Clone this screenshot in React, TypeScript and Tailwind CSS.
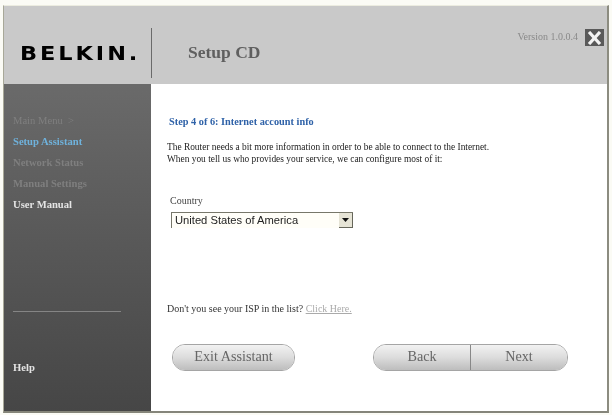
const serif = 'font-["Liberation_Serif",serif]';

function PillButton({ children, className }: { children: React.ReactNode; className: string }) {
  return (
    <div className={`flex items-center justify-center h-full pb-[1px] bg-gradient-to-b from-[#f2f2f2] via-[#dcdcdc] to-[#bdbdbd] text-[#666] text-[14.2px] ${serif} ${className}`}>
      {children}
    </div>
  );
}

function NavItem({ label, color, bold = true }: { label: string; color: string; bold?: boolean }) {
  return <div className={`h-[21px] leading-[21px] text-[10.6px] whitespace-pre ${bold ? 'font-bold' : ''} ${color}`}>{label}</div>;
}

export default function App() {
  return (
    <div className="w-[612px] h-[415px] overflow-hidden bg-[#fbfbf5] pt-[5px] pl-[3px] pr-[3px] pb-[2px] blur-[0.4px]">
      <div className="w-[606px] h-[408px] flex flex-col bg-white border-l border-l-[#a8a898] border-t border-t-[#ecece0] border-r-[2px] border-r-[#8c8c80] border-b-[2px] border-b-[#85857a]">
        {/* Header */}
        <div className="h-[78px] shrink-0 bg-[#c9c9c9] flex relative">
          <div className="w-[147px] pl-[16px] pt-[37px]">
            <div className='origin-left scale-x-[1.18] font-["DejaVu_Sans",sans-serif] font-bold text-[19px] leading-[20px] tracking-[2.5px] text-black whitespace-nowrap'>BELKIN.</div>
          </div>
          <div className="w-[1px] h-[50px] mt-[22px] bg-[#6a6a6a]" />
          <div className={`ml-[36px] pt-[36px] text-[17.5px] leading-[20px] font-bold text-[#5f5f5f] ${serif}`}>Setup CD</div>
          <div className="ml-auto flex items-start pt-[23px] pr-[3px]">
            <span className={`mt-[2px] mr-[7px] text-[10px] leading-[12px] text-[#8a8a8a] ${serif}`}>Version 1.0.0.4</span>
            <div className="w-[19px] h-[17px] bg-[#5a5a5a] flex items-center justify-center">
              <svg width="15" height="14" viewBox="0 0 15 14">
                <path d="M2 1 L13 13 M13 1 L2 13" stroke="#f4f4f4" strokeWidth="3.2" />
              </svg>
            </div>
          </div>
        </div>

        <div className="flex flex-1 min-h-0">
          {/* Sidebar */}
          <div className={`w-[147px] shrink-0 bg-gradient-to-b from-[#6a6a6a] to-[#464646] pl-[9px] flex flex-col ${serif}`}>
            <div className="mt-[26px]">
              <NavItem label="Main Menu  >" color="text-[#7f7f7f]" bold={false} />
              <NavItem label="Setup Assistant" color="text-[#6fb2dc]" />
              <NavItem label="Network Status" color="text-[#7f7f7f]" />
              <NavItem label="Manual Settings" color="text-[#7f7f7f]" />
              <NavItem label="User Manual" color="text-[#e4e4e4]" />
            </div>
            <div className="mt-[96px] w-[108px] h-[1px] bg-[#858585]" />
            <div className="mt-[46px] text-[10.6px] font-bold leading-[20px] text-[#e4e4e4]">Help</div>
          </div>

          {/* Content */}
          <div className={`flex-1 pl-[16px] flex flex-col ${serif}`}>
            <div className="mt-[32px] ml-[2px] text-[10.3px] leading-[12px] font-bold text-[#2f62a8] whitespace-nowrap">Step 4 of 6: Internet account info</div>
            <div className="mt-[13px] text-[9.4px] leading-[12px] text-[#222] whitespace-nowrap">
              <div>The Router needs a bit more information in order to be able to connect to the Internet.</div>
              <div>When you tell us who provides your service, we can configure most of it:</div>
            </div>
            <div className="mt-[30px] ml-[3px] text-[10px] leading-[12px] text-[#444]">Country</div>
            <div className="mt-[5px] ml-[4px] w-[182px] h-[16px] flex border-t border-l border-t-[#77776a] border-l-[#77776a] bg-[#fffef8]">
              <div className='flex-1 pl-[3px] font-["Liberation_Sans",sans-serif] text-[11.2px] leading-[15px] text-[#222]'>United States of America</div>
              <div className="w-[14px] h-full bg-[#e6e4d6] border-r border-b border-r-[#66665a] border-b-[#66665a] flex items-center justify-center">
                <svg width="7" height="4" viewBox="0 0 7 4"><path d="M0 0 H7 L3.5 4 Z" fill="#111" /></svg>
              </div>
            </div>
            <div className="mt-[75px] text-[10px] leading-[12px] text-[#333] whitespace-nowrap">
              Don't you see your ISP in the list? <span className="text-[#aaa] underline">Click Here.</span>
            </div>
            <div className="mt-[29px] flex h-[27px]">
              <div className="ml-[5px] w-[123px] h-full rounded-[13px] overflow-hidden border border-[#a5a5a5]">
                <PillButton className="w-full">Exit Assistant</PillButton>
              </div>
              <div className="ml-[78px] w-[195px] h-full rounded-[13px] overflow-hidden border border-[#a5a5a5] flex">
                <PillButton className="w-[97px] border-r border-r-[#888]">Back</PillButton>
                <PillButton className="flex-1">Next</PillButton>
              </div>
            </div>
          </div>
        </div>
      </div>
    </div>
  );
}
